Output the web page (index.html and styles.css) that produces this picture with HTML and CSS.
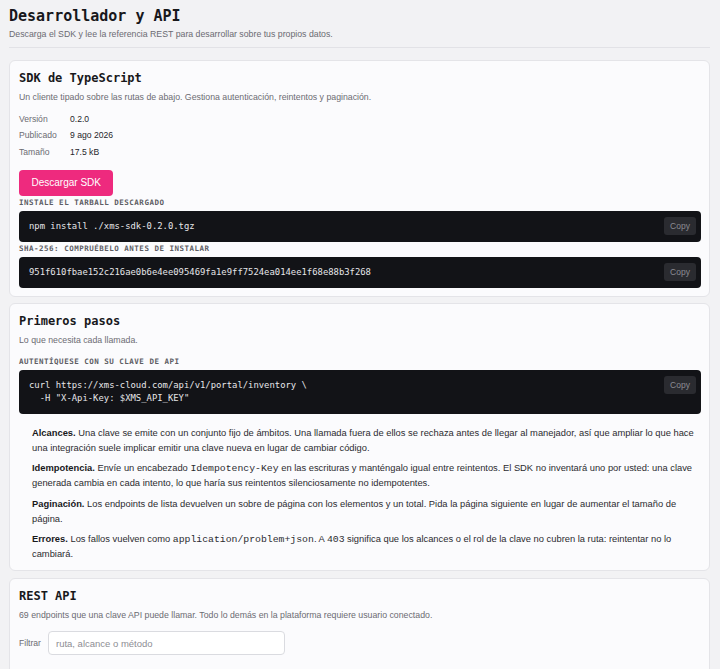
FILE: index.html
```html
<!DOCTYPE html>
<html lang="es">
<head>
<meta charset="utf-8">
<title>Desarrollador y API</title>
<link rel="stylesheet" href="styles.css">
</head>
<body>
<div class="page">
  <header class="page-head">
    <h1 class="page-title">Desarrollador y API</h1>
    <p class="page-sub">Descarga el SDK y lee la referencia REST para desarrollar sobre tus propios datos.</p>
  </header>

  <section class="card">
    <h2 class="card-title">SDK de TypeScript</h2>
    <p class="card-desc">Un cliente tipado sobre las rutas de abajo. Gestiona autenticación, reintentos y paginación.</p>
    <dl class="meta">
      <dt>Versión</dt><dd>0.2.0</dd>
      <dt>Publicado</dt><dd>9 ago 2026</dd>
      <dt>Tamaño</dt><dd>17.5 kB</dd>
    </dl>
    <button class="btn-primary" type="button">Descargar SDK</button>
    <div class="code-label">INSTALE EL TARBALL DESCARGADO</div>
    <div class="code-block">
      <pre class="code">npm install ./xms-sdk-0.2.0.tgz</pre>
      <button class="copy" type="button">Copy</button>
    </div>
    <div class="code-label">SHA-256: COMPRUÉBELO ANTES DE INSTALAR</div>
    <div class="code-block">
      <pre class="code">951f610fbae152c216ae0b6e4ee095469fa1e9ff7524ea014ee1f68e88b3f268</pre>
      <button class="copy" type="button">Copy</button>
    </div>
  </section>

  <section class="card">
    <h2 class="card-title">Primeros pasos</h2>
    <p class="card-desc">Lo que necesita cada llamada.</p>
    <div class="code-label code-label-spaced">AUTENTÍQUESE CON SU CLAVE DE API</div>
    <div class="code-block">
      <pre class="code">curl https://xms-cloud.com/api/v1/portal/inventory \
  -H "X-Api-Key: $XMS_API_KEY"</pre>
      <button class="copy" type="button">Copy</button>
    </div>
    <div class="notes">
      <p class="note"><strong>Alcances.</strong> Una clave se emite con un conjunto fijo de ámbitos. Una llamada fuera de ellos se rechaza antes de llegar al manejador, así que ampliar lo que hace una integración suele implicar emitir una clave nueva en lugar de cambiar código.</p>
      <p class="note"><strong>Idempotencia.</strong> Envíe un encabezado <code>Idempotency-Key</code> en las escrituras y manténgalo igual entre reintentos. El SDK no inventará uno por usted: una clave generada cambia en cada intento, lo que haría sus reintentos silenciosamente no idempotentes.</p>
      <p class="note"><strong>Paginación.</strong> Los endpoints de lista devuelven un sobre de página con los elementos y un total. Pida la página siguiente en lugar de aumentar el tamaño de página.</p>
      <p class="note"><strong>Errores.</strong> Los fallos vuelven como <code>application/problem+json</code>. A <code>403</code> significa que los alcances o el rol de la clave no cubren la ruta: reintentar no lo cambiará.</p>
    </div>
  </section>

  <section class="card card-last">
    <h2 class="card-title">REST API</h2>
    <p class="card-desc">69 endpoints que una clave API puede llamar. Todo lo demás en la plataforma requiere usuario conectado.</p>
    <div class="filter">
      <label class="filter-label" for="f">Filtrar</label>
      <input class="filter-input" id="f" type="text" placeholder="ruta, alcance o método">
    </div>
  </section>
</div>
</body>
</html>
```

FILE: styles.css
```css
* { box-sizing: border-box; }

html, body {
  margin: 0;
  padding: 0;
  background: #f2f2f4;
  font-family: "Liberation Sans", Arial, sans-serif;
  color: #26262b;
}

.page {
  padding: 5.5px 10px 0 9px;
}

.page-head {
  padding-bottom: 7px;
  border-bottom: 1px solid #e2e2e6;
}

.page-title {
  margin: 0;
  font-family: "DejaVu Sans Mono", monospace;
  font-weight: 700;
  font-size: 15px;
  line-height: 20px;
  color: #18181b;
}

.page-sub {
  margin: 2.5px 0 0;
  font-size: 8.75px;
  line-height: 12px;
  color: #6b6b72;
}

.card {
  margin-top: 6.5px;
  background: #fbfbfd;
  border: 1px solid #e4e4e8;
  border-radius: 6px;
  padding: 9px 8px 8px 9px;
}

.page-head + .card {
  margin-top: 12px;
}

.card-last {
  padding-bottom: 40px;
}

.card-title {
  margin: 0;
  font-family: "DejaVu Sans Mono", monospace;
  font-weight: 700;
  font-size: 12px;
  line-height: 16px;
  color: #18181b;
}

.card-desc {
  margin: 5px 0 0;
  font-size: 8.75px;
  line-height: 12px;
  color: #6b6b72;
}

.meta {
  margin: 7.7px 0 0;
  display: grid;
  grid-template-columns: 51px auto;
  font-size: 8.6px;
  line-height: 16.5px;
}

.meta dt {
  color: #6b6b72;
}

.meta dd {
  margin: 0;
  color: #26262b;
}

.btn-primary {
  display: block;
  margin-top: 9.8px;
  height: 26px;
  padding: 0 12.5px;
  border: 0;
  border-radius: 4px;
  background: #ee2a7e;
  color: #ffffff;
  font-family: "Liberation Sans", Arial, sans-serif;
  font-size: 10px;
  cursor: pointer;
}

.code-label {
  margin: 1.7px 0 3.3px;
  font-family: "DejaVu Sans Mono", monospace;
  font-weight: 700;
  font-size: 7.5px;
  line-height: 10px;
  letter-spacing: 0.5px;
  color: #5d5d64;
}

.code-label-spaced {
  margin-top: 10.3px;
}

.code-block {
  position: relative;
  background: #121317;
  border-radius: 4px;
}

.code {
  margin: 0;
  padding: 9.25px 10px;
  font-family: "DejaVu Sans Mono", monospace;
  font-size: 8.9px;
  line-height: 12.5px;
  color: #e6e6e9;
  white-space: pre;
  overflow: hidden;
}

.copy {
  position: absolute;
  top: 6px;
  right: 5px;
  width: 32px;
  height: 18px;
  padding: 0;
  border: 0;
  border-radius: 3px;
  background: #2a2b30;
  color: #8c8c93;
  font-family: "Liberation Sans", Arial, sans-serif;
  font-size: 8.5px;
  cursor: pointer;
}

.notes {
  margin-top: 12px;
  padding-left: 13px;
}

.note {
  margin: 0;
  font-size: 9.35px;
  line-height: 15px;
  color: #2b2b30;
}

.note + .note {
  margin-top: 5.6px;
}

.note strong {
  color: #18181b;
  font-weight: 700;
}

.note code {
  font-family: "Liberation Mono", "Courier New", monospace;
  font-size: 9.8px;
  line-height: 1;
  color: #2b2b30;
}

.filter {
  margin-top: 10px;
  display: flex;
  align-items: center;
  gap: 7px;
}

.filter-label {
  font-size: 8.6px;
  color: #6b6b72;
}

.filter-input {
  width: 237px;
  height: 24.6px;
  padding: 0 7px;
  border: 1px solid #dadbe0;
  border-radius: 4px;
  background: #ffffff;
  font-family: "Liberation Sans", Arial, sans-serif;
  font-size: 9.5px;
  color: #26262b;
  outline: none;
}

.filter-input::placeholder {
  color: #8d8d94;
}
```
